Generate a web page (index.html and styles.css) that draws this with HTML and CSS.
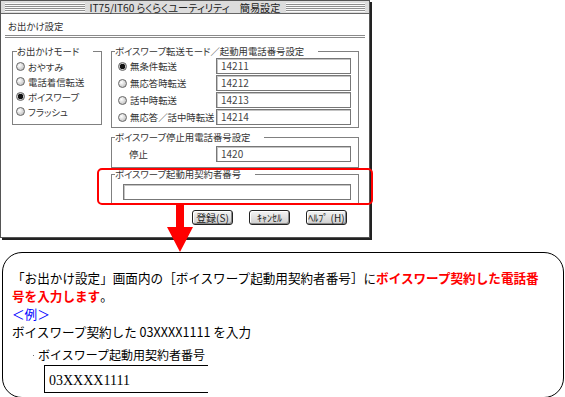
FILE: index.html
```html
<!DOCTYPE html>
<html lang="ja">
<head>
  <meta charset="UTF-8">
  <title>お出かけ設定</title>
  <link rel="stylesheet" href="styles.css">
</head>
<body>
  <div class="page">
    <div class="window">
      <div class="titlebar"><span class="title-text">IT75/IT60 らくらくユーティリティ　簡易設定</span></div>
      <div class="dialog-head">お出かけ設定</div>

      <div class="dialog-body">
        <fieldset class="group mode-group">
          <legend>お出かけモード</legend>
          <div class="radio-row"><span class="radio"></span>おやすみ</div>
          <div class="radio-row"><span class="radio"></span>電話着信転送</div>
          <div class="radio-row"><span class="radio on"></span>ボイスワープ</div>
          <div class="radio-row"><span class="radio"></span>フラッシュ</div>
        </fieldset>

        <div class="right-col">
          <fieldset class="group transfer-group">
            <legend>ボイスワープ転送モード／起動用電話番号設定</legend>
            <div class="field-row"><span class="radio on"></span><span class="field-label">無条件転送</span><span class="input">14211</span></div>
            <div class="field-row"><span class="radio"></span><span class="field-label">無応答時転送</span><span class="input">14212</span></div>
            <div class="field-row"><span class="radio"></span><span class="field-label">話中時転送</span><span class="input">14213</span></div>
            <div class="field-row"><span class="radio"></span><span class="field-label">無応答／話中時転送</span><span class="input">14214</span></div>
          </fieldset>

          <fieldset class="group stop-group">
            <legend>ボイスワープ停止用電話番号設定</legend>
            <div class="field-row"><span class="field-label stop-label">停止</span><span class="input">1420</span></div>
          </fieldset>

          <fieldset class="group contract-group">
            <legend>ボイスワープ起動用契約者番号</legend>
            <div class="field-row"><span class="input wide"></span></div>
          </fieldset>
        </div>
      </div>

      <div class="buttons">
        <span class="btn">登録(S)</span>
        <span class="btn">ｷｬﾝｾﾙ</span>
        <span class="btn">ﾍﾙﾌﾟ (H)</span>
      </div>

      <div class="highlight"></div>
    </div>

    <svg class="arrow" width="28" height="50" viewBox="0 0 28 50">
      <polygon points="10,0 18,0 18,24 27,24 14,49 1,24 10,24" fill="#ff0000"/>
    </svg>

    <div class="callout">
      <p class="line">「お出かけ設定」画面内の［ボイスワープ起動用契約者番号］に<strong>ボイスワープ契約した電話番<br>号を入力します</strong>。</p>
      <p class="line example">＜例＞</p>
      <p class="line">ボイスワープ契約した 03XXXX1111 を入力</p>
      <div class="sample">
        <div class="sample-label">ボイスワープ起動用契約者番号</div>
        <div class="sample-input">03XXXX1111</div>
      </div>
    </div>
  </div>
</body>
</html>
```

FILE: styles.css
```css
* {
  margin: 0;
  padding: 0;
  box-sizing: border-box;
}
html, body {
  width: 100%;
  height: 100%;
  overflow: hidden;
  background: #fff;
  font-family: "Noto Sans CJK JP", "Noto Sans", sans-serif;
  color: #000;
}
.page {
  position: relative;
  display: flex;
  flex-direction: column;
}

/* dialog window */
.window {
  position: relative;
  width: 370px;
  height: 238px;
  border: 1px solid #555;
  box-shadow: 2px 2px 0 #222;
  background: #fff;
  color: #333;
  font-size: 9.4px;
  font-feature-settings: "palt";
  white-space: nowrap;
}
.titlebar {
  display: flex;
  align-items: center;
  height: 13px;
  padding: 2px 4px;
  background: #dcdcdc;
  border-bottom: 1px solid #666;
}
.titlebar::before,
.titlebar::after {
  content: "";
  flex: 1;
  height: 9px;
  background: repeating-linear-gradient(#fbfbfb 0 1px, #8e8e8e 1px 2px);
}
.title-text {
  padding: 0 5px;
  font-size: 10.2px;
  line-height: 11px;
  color: #222;
}
.dialog-head {
  height: 24px;
  line-height: 20px;
  margin: 0 4px;
  padding: 2px 0 0 3px;
  border-bottom: 3px double #8a8a8a;
}
.dialog-body {
  display: flex;
  gap: 9px;
  padding: 7px 0 0 11px;
}
.group {
  border: 1px solid #808080;
  min-width: 0;
}
.group legend {
  padding: 0 14px 0 0;
  line-height: 12px;
}
.mode-group {
  width: 90px;
  height: 80px;
  padding: 2px 0 0 3px;
}
.mode-group legend {
  margin-left: 1px;
}
.radio-row {
  display: flex;
  align-items: center;
  height: 15px;
}
.radio {
  flex: none;
  width: 9px;
  height: 9px;
  margin-right: 3px;
  border: 1px solid #666;
  border-radius: 50%;
  background: radial-gradient(circle at 35% 35%, #fff, #b4b4b4);
}
.radio.on {
  background: radial-gradient(circle, #111 0 2.5px, #c8c8c8 3px);
}
.right-col {
  display: flex;
  flex-direction: column;
  width: 248px;
}
.transfer-group {
  height: 83px;
  padding: 1px 7px 0 6px;
}
.transfer-group legend,
.stop-group legend {
  margin-left: -3px;
}
.field-row {
  display: flex;
  align-items: center;
  margin-bottom: 1px;
}
.field-label {
  flex: 1;
}
.stop-label {
  padding-left: 11px;
}
.input {
  flex: none;
  width: 135px;
  height: 16px;
  padding-left: 4px;
  border: 1px solid #777;
  box-shadow: inset 1px 1px 0 #c4c4c4;
  font-size: 10px;
  line-height: 14px;
  color: #444;
}
.input.wide {
  width: 228px;
}
.stop-group {
  height: 37px;
  margin-top: 3px;
  padding: 3px 7px 0 6px;
}
.contract-group {
  height: 36px;
  padding: 4px 7px 0 11px;
}
.contract-group legend {
  margin-left: -8px;
}
.buttons {
  display: flex;
  justify-content: flex-end;
  gap: 16px;
  padding: 6px 22px 0 0;
}
.btn {
  display: flex;
  align-items: center;
  justify-content: center;
  width: 41px;
  height: 15px;
  border: 1px solid #222;
  border-radius: 3px;
  background: linear-gradient(#f4f4f4, #cfcfcf);
  box-shadow: inset -1px -1px 0 #8a8a8a, inset 1px 1px 0 #fff;
  font-size: 10px;
  color: #222;
}
.highlight {
  position: absolute;
  left: 96px;
  top: 167px;
  width: 276px;
  height: 37px;
  border: 2px solid #ff0000;
  border-radius: 5px;
}
.arrow {
  position: absolute;
  left: 166px;
  top: 203px;
}

/* explanation box */
.callout {
  width: 562px;
  height: 146px;
  margin: 14px 0 0 2px;
  padding: 16px 0 0 9px;
  border: 1px solid #000;
  border-radius: 20px;
  font-size: 12.6px;
}
.line {
  line-height: 18px;
}
.line strong {
  color: #ff0000;
}
.example {
  color: #0000ff;
}
.sample {
  padding: 5px 0 0 21px;
}
.sample-label {
  display: flex;
  align-items: center;
  font-size: 12px;
  line-height: 18px;
}
.sample-label::before {
  content: "";
  width: 1px;
  height: 1px;
  margin: 0 4px 0 0;
  background: #777;
}
.sample-input {
  width: 164px;
  height: 28px;
  margin: 1px 0 0 11px;
  padding-left: 4px;
  border: 1px solid #000;
  border-right: none;
  font-family: "Liberation Serif", serif;
  font-size: 14px;
  line-height: 30px;
}
```
